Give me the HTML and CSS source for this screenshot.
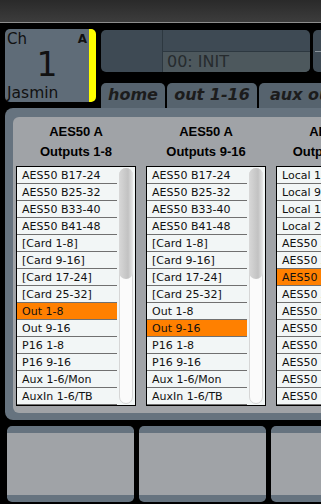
FILE: index.html
```html
<!DOCTYPE html>
<html lang="en">
<head>
  <meta charset="UTF-8">
  <meta name="viewport" content="width=device-width, initial-scale=1.0">
  <title>Output Routing</title>
  <link rel="stylesheet" href="styles.css">
</head>
<body>
  <div class="topbar"></div>

  <div class="head">
    <div class="chan">
      <div class="chan-top">
        <span class="chan-label">Ch</span>
        <span class="chan-bank">A</span>
      </div>
      <div class="chan-num">1</div>
      <div class="chan-name">Jasmin</div>
    </div>

    <div class="head-right">
      <div class="displays">
        <div class="scene">
          <div class="scene-left"></div>
          <div class="scene-main">
            <div class="scene-top"></div>
            <div class="scene-name">00: INIT</div>
          </div>
        </div>
        <div class="meter"><div class="meter-line"></div></div>
      </div>

      <div class="tabs">
        <div class="tab tab-home">home</div>
        <div class="tab tab-out">out 1-16</div>
        <div class="tab tab-aux">aux out</div>
      </div>
    </div>
  </div>

  <div class="panel">
    <div class="panel-inner">

      <div class="col">
        <div class="col-title">AES50 A<br>Outputs 1-8</div>
        <div class="list">
          <div class="rows">
            <div class="row">AES50 B17-24</div>
            <div class="row">AES50 B25-32</div>
            <div class="row">AES50 B33-40</div>
            <div class="row">AES50 B41-48</div>
            <div class="row">[Card 1-8]</div>
            <div class="row">[Card 9-16]</div>
            <div class="row">[Card 17-24]</div>
            <div class="row">[Card 25-32]</div>
            <div class="row selected">Out 1-8</div>
            <div class="row">Out 9-16</div>
            <div class="row">P16 1-8</div>
            <div class="row">P16 9-16</div>
            <div class="row">Aux 1-6/Mon</div>
            <div class="row">AuxIn 1-6/TB</div>
          </div>
          <div class="scroll"><div class="track"><div class="thumb"></div></div></div>
        </div>
      </div>

      <div class="col">
        <div class="col-title">AES50 A<br>Outputs 9-16</div>
        <div class="list">
          <div class="rows">
            <div class="row">AES50 B17-24</div>
            <div class="row">AES50 B25-32</div>
            <div class="row">AES50 B33-40</div>
            <div class="row">AES50 B41-48</div>
            <div class="row">[Card 1-8]</div>
            <div class="row">[Card 9-16]</div>
            <div class="row">[Card 17-24]</div>
            <div class="row">[Card 25-32]</div>
            <div class="row">Out 1-8</div>
            <div class="row selected">Out 9-16</div>
            <div class="row">P16 1-8</div>
            <div class="row">P16 9-16</div>
            <div class="row">Aux 1-6/Mon</div>
            <div class="row">AuxIn 1-6/TB</div>
          </div>
          <div class="scroll"><div class="track"><div class="thumb"></div></div></div>
        </div>
      </div>

      <div class="col">
        <div class="col-title">AES50 A<br>Outputs 17-24</div>
        <div class="list">
          <div class="rows">
            <div class="row">Local 1-8</div>
            <div class="row">Local 9-16</div>
            <div class="row">Local 17-24</div>
            <div class="row">Local 25-32</div>
            <div class="row">AES50 A1-8</div>
            <div class="row">AES50 A9-16</div>
            <div class="row selected">AES50 A17-24</div>
            <div class="row">AES50 A25-32</div>
            <div class="row">AES50 A33-40</div>
            <div class="row">AES50 A41-48</div>
            <div class="row">AES50 B1-8</div>
            <div class="row">AES50 B9-16</div>
            <div class="row">AES50 B17-24</div>
            <div class="row">AES50 B25-32</div>
          </div>
          <div class="scroll"><div class="track"><div class="thumb"></div></div></div>
        </div>
      </div>

    </div>
  </div>

  <div class="buttons">
    <div class="btn"></div>
    <div class="btn"></div>
    <div class="btn"></div>
  </div>
</body>
</html>
```

FILE: styles.css
```css
html, body {
  width: 321px;
  height: 504px;
  overflow: hidden;
}
body {
  margin: 0;
  padding: 0;
  background-color: #000;
  font-family: "DejaVu Sans", Verdana, sans-serif;
  color: #111;
}

/* top strip */
.topbar {
  height: 22px;
  background: linear-gradient(#2a2a2a, #3c3c3c);
  border-bottom: 1px solid #8e8e8e;
}

.head {
  display: flex;
  gap: 5px;
  padding: 6px 0 0 5px;
  height: 79px;
}

/* channel box */
.chan {
  width: 84px;
  height: 73px;
  flex: none;
  background-color: #5f6c78;
  border-right: 7px solid #ffff00;
  border-radius: 5px;
  display: flex;
  flex-direction: column;
}
.chan-top {
  display: flex;
  justify-content: space-between;
  align-items: flex-start;
  height: 18px;
  padding: 2px 2px 0 2px;
  box-sizing: border-box;
}
.chan-label {
  font-size: 15px;
  line-height: 16px;
}
.chan-bank {
  font-size: 12px;
  font-weight: bold;
  line-height: 14px;
  padding-top: 1px;
}
.chan-num {
  font-size: 33px;
  line-height: 33px;
  text-align: center;
  margin-top: 1px;
}
.chan-name {
  font-size: 15.5px;
  line-height: 16px;
  margin-top: 4px;
  padding-left: 2px;
}

.head-right {
  display: flex;
  flex-direction: column;
  flex: 1;
  min-width: 0;
}
.displays {
  display: flex;
  gap: 3px;
  margin-top: 1px;
  height: 42px;
}

/* scene display */
.scene {
  width: 209px;
  flex: none;
  display: flex;
  border-radius: 5px;
  overflow: hidden;
  background-color: #3e4a54;
}
.scene-left {
  width: 61px;
  border-right: 1px solid #2d3840;
}
.scene-main {
  flex: 1;
  display: flex;
  flex-direction: column;
}
.scene-top {
  height: 21px;
  border-bottom: 1px solid #2d3840;
}
.scene-name {
  flex: 1;
  background-color: #4d585d;
  color: #262b2e;
  font-size: 16px;
  line-height: 20px;
  padding-left: 4px;
}

.meter {
  flex: 1;
  background-color: #3e4a54;
  border-radius: 5px 0 0 5px;
  padding: 21px 0 0 2px;
}
.meter-line {
  height: 1px;
  background-color: #8a949b;
}

/* tabs */
.tabs {
  display: flex;
  gap: 2px;
  margin-top: 11px;
  height: 25px;
}
.tab {
  flex: none;
  background-color: #56636e;
  border-radius: 5px 5px 0 0;
  font-size: 16px;
  font-weight: bold;
  font-style: italic;
  color: #1c1c1c;
  line-height: 23px;
  text-align: center;
  white-space: nowrap;
  overflow: hidden;
}
.tab-home { width: 64px; }
.tab-out { width: 90px; }
.tab-aux { width: 90px; }

/* routing panel */
.panel {
  margin-left: 5px;
  height: 312px;
  box-sizing: border-box;
  background-color: #66737f;
  border-radius: 8px 0 0 8px;
  padding: 9px 0 7px 8px;
}
.panel-inner {
  height: 100%;
  box-sizing: border-box;
  background-color: #a0a3a7;
  border-radius: 6px 0 0 6px;
  padding: 5px 0 0 3px;
  display: flex;
  gap: 10px;
  overflow: hidden;
}
.col {
  width: 120px;
  flex: none;
}
.col-title {
  font-family: "Liberation Sans", Arial, sans-serif;
  font-weight: bold;
  font-size: 13px;
  line-height: 20px;
  text-align: center;
  color: #000;
  margin-bottom: 4px;
}
.list {
  display: flex;
  height: 240px;
  box-sizing: border-box;
  border: 1px solid #000;
  background-color: #f2f6f6;
}
.rows {
  width: 100px;
  flex: none;
}
.row {
  height: 14px;
  padding: 2px 0 0 5px;
  border-bottom: 1px solid #707070;
  font-size: 11px;
  line-height: 14px;
  white-space: nowrap;
  color: #111;
}
.row.selected {
  background-color: #ff8000;
}
.scroll {
  flex: 1;
  padding: 1px 2px 1px 2px;
}
.track {
  height: 100%;
  box-sizing: border-box;
  border: 1px solid #d6d6d6;
  border-radius: 7px;
  background-color: #fbfbfb;
}
.thumb {
  height: 111px;
  margin: -1px;
  border-radius: 7px;
  background: linear-gradient(to right, #d8d8d8, #c2c2c2 65%, #e8e8e8);
}

/* soft keys */
.buttons {
  display: flex;
  gap: 5px;
  padding: 6px 0 0 7px;
}
.btn {
  width: 127px;
  height: 62px;
  flex: none;
  background-color: #a0a3a7;
  border-top: 7px solid #66737f;
  border-bottom: 7px solid #66737f;
  border-radius: 5px;
}
```
